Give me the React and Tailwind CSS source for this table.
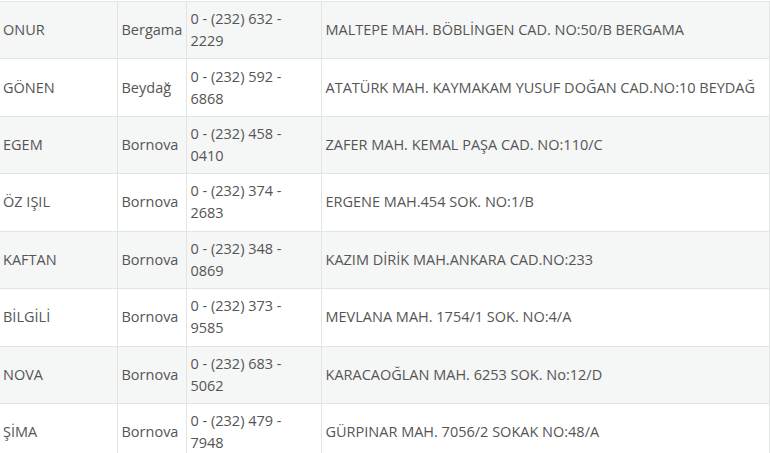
const rows = [
  ["ONUR", "Bergama", "0 - (232) 632 - 2229", "MALTEPE MAH. BÖBLİNGEN CAD. NO:50/B BERGAMA"],
  ["GÖNEN", "Beydağ", "0 - (232) 592 - 6868", "ATATÜRK MAH. KAYMAKAM YUSUF DOĞAN CAD.NO:10 BEYDAĞ"],
  ["EGEM", "Bornova", "0 - (232) 458 - 0410", "ZAFER MAH. KEMAL PAŞA CAD. NO:110/C"],
  ["ÖZ IŞIL", "Bornova", "0 - (232) 374 - 2683", "ERGENE MAH.454 SOK. NO:1/B"],
  ["KAFTAN", "Bornova", "0 - (232) 348 - 0869", "KAZIM DİRİK MAH.ANKARA CAD.NO:233"],
  ["BİLGİLİ", "Bornova", "0 - (232) 373 - 9585", "MEVLANA MAH. 1754/1 SOK. NO:4/A"],
  ["NOVA", "Bornova", "0 - (232) 683 - 5062", "KARACAOĞLAN MAH. 6253 SOK. No:12/D"],
  ["ŞİMA", "Bornova", "0 - (232) 479 - 7948", "GÜRPINAR MAH. 7056/2 SOKAK NO:48/A"],
];

export default function App() {
  return (
    <div className="w-[770px] h-[453px] overflow-hidden bg-white" style={{ fontFamily: '"Open Sans", sans-serif' }}>
      <table className="mt-[1px] w-[769px] border-collapse table-fixed text-[14.5px] leading-[22px] text-[#555]">
        <colgroup>
          <col className="w-[117px]" />
          <col className="w-[69px]" />
          <col className="w-[135px]" />
          <col className="w-[448px]" />
        </colgroup>
        <tbody>
          {rows.map((r, i) => (
            <tr key={i} className={`h-[57.43px] ${i % 2 === 0 ? "bg-[#f5f6f6]" : "bg-white"}`}>
              <td className="border border-[#e2e5e5] border-l-0 pl-[3px] pr-[5px] align-middle">{r[0]}</td>
              <td className="border border-[#e2e5e5] px-[4px] align-middle whitespace-nowrap">{r[1]}</td>
              <td className="border border-[#e2e5e5] px-[4px] align-middle">{r[2]}</td>
              <td className="border border-[#e2e5e5] px-[4px] align-middle whitespace-nowrap">{r[3]}</td>
            </tr>
          ))}
        </tbody>
      </table>
    </div>
  );
}
